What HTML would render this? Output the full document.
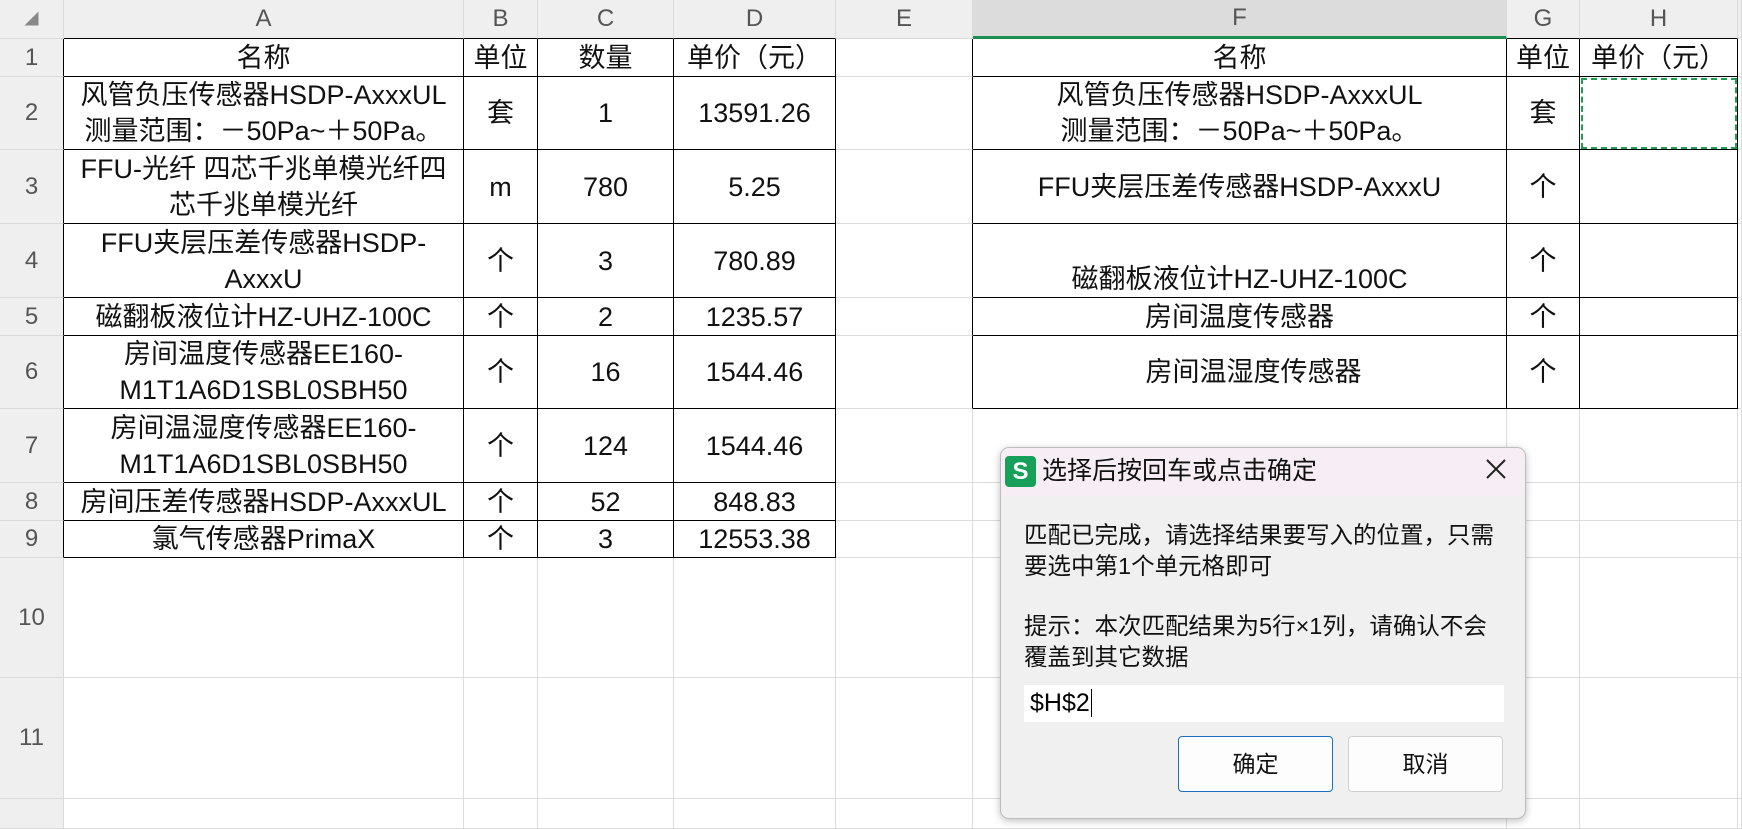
<!DOCTYPE html>
<html><head><meta charset="utf-8"><style>
body{margin:0;width:1742px;height:824px;overflow:hidden;background:#fff;font-family:"Liberation Sans","Noto Sans CJK SC",sans-serif;position:relative}
table{border-collapse:separate;border-spacing:0;table-layout:fixed;position:absolute;left:0;top:0}
td{border-right:1px solid #dcdcdc;border-bottom:1px solid #dcdcdc;padding:0;text-align:center;font-size:27px;line-height:36px;color:#111;overflow:hidden;white-space:nowrap}
td.h{background:#efefef;color:#555;font-size:24px;border-color:#dadada}
td.sel{background:#dcdcdc;border-bottom:3px solid #1e8e4e}
td.r{background:#efefef;color:#555;font-size:24px;border-color:#dadada}
.b{border-right-color:#000!important;border-bottom-color:#000!important}
.br{border-right-color:#000!important}
.bb{border-bottom-color:#000!important}
.dlg{position:absolute;left:1000px;top:447px;width:524px;height:370px;background:#f0f0f0;border:1px solid #bdbdbd;border-radius:9px;box-shadow:0 2px 8px rgba(0,0,0,.25);overflow:hidden}
.tb{height:48px;background:#f7eef5;position:relative}
.logo{position:absolute;left:4px;top:8px;width:31px;height:31px;background:#16a05a;border-radius:4px;color:#fff;font-size:24px;font-weight:bold;text-align:center;line-height:31px}
.tt{position:absolute;left:41px;top:8px;font-size:25px;color:#111;line-height:31px}
.x{position:absolute;right:18px;top:10px}
.tx{position:absolute;left:23px;font-size:23.5px;color:#111;line-height:31px;white-space:nowrap}
.inp{position:absolute;left:23px;top:237px;width:480px;height:37px;background:#fff;font-size:25px;line-height:37px;padding-left:6px;box-sizing:border-box}
.btn{position:absolute;top:288px;height:56px;width:155px;background:#fdfdfd;border:1px solid #d0d0d0;border-radius:4px;box-sizing:border-box;text-align:center;line-height:54px;font-size:23px;color:#111}
</style></head><body>
<table>
<colgroup><col style="width:64px"><col style="width:400px"><col style="width:74px"><col style="width:136px"><col style="width:162px"><col style="width:137px"><col style="width:534px"><col style="width:73px"><col style="width:158px"><col style="width:4px"></colgroup>
<tr style="height:38px"><td class="h" style="font-size:14px;color:#888">◢</td><td class="h bb">A</td><td class="h bb">B</td><td class="h bb">C</td><td class="h bb">D</td><td class="h">E</td><td class="h sel">F</td><td class="h bb">G</td><td class="h bb">H</td><td class="h"></td></tr>
<tr style="height:38px"><td class="r br">1</td><td class="b">名称</td><td class="b">单位</td><td class="b">数量</td><td class="b">单价（元）</td><td class="br"></td><td class="b">名称</td><td class="b">单位</td><td class="b">单价（元）</td><td></td></tr>
<tr style="height:73px"><td class="r br">2</td><td class="b">风管负压传感器HSDP-AxxxUL<br>测量范围：－50Pa~＋50Pa。</td><td class="b">套</td><td class="b">1</td><td class="b">13591.26</td><td class="br"></td><td class="b">风管负压传感器HSDP-AxxxUL<br>测量范围：－50Pa~＋50Pa。</td><td class="b">套</td><td class="b" style="outline:2px dashed #1e9e50;outline-offset:-3px"></td><td></td></tr>
<tr style="height:74px"><td class="r br">3</td><td class="b">FFU-光纤 四芯千兆单模光纤四<br>芯千兆单模光纤</td><td class="b">m</td><td class="b">780</td><td class="b">5.25</td><td class="br"></td><td class="b">FFU夹层压差传感器HSDP-AxxxU</td><td class="b">个</td><td class="b"></td><td></td></tr>
<tr style="height:74px"><td class="r br">4</td><td class="b">FFU夹层压差传感器HSDP-<br>AxxxU</td><td class="b">个</td><td class="b">3</td><td class="b">780.89</td><td class="br"></td><td class="b" style="vertical-align:bottom">磁翻板液位计HZ-UHZ-100C</td><td class="b">个</td><td class="b"></td><td></td></tr>
<tr style="height:38px"><td class="r br">5</td><td class="b">磁翻板液位计HZ-UHZ-100C</td><td class="b">个</td><td class="b">2</td><td class="b">1235.57</td><td class="br"></td><td class="b">房间温度传感器</td><td class="b">个</td><td class="b"></td><td></td></tr>
<tr style="height:73px"><td class="r br">6</td><td class="b">房间温度传感器EE160-<br>M1T1A6D1SBL0SBH50</td><td class="b">个</td><td class="b">16</td><td class="b">1544.46</td><td class="br"></td><td class="b" style="padding-left:28px">房间温湿度传感器</td><td class="b">个</td><td class="b"></td><td></td></tr>
<tr style="height:74px"><td class="r br">7</td><td class="b">房间温湿度传感器EE160-<br>M1T1A6D1SBL0SBH50</td><td class="b">个</td><td class="b">124</td><td class="b">1544.46</td><td></td><td></td><td></td><td></td><td></td></tr>
<tr style="height:38px"><td class="r br">8</td><td class="b">房间压差传感器HSDP-AxxxUL</td><td class="b">个</td><td class="b">52</td><td class="b">848.83</td><td></td><td></td><td></td><td></td><td></td></tr>
<tr style="height:36px"><td class="r br">9</td><td class="b">氯气传感器PrimaX</td><td class="b">个</td><td class="b">3</td><td class="b">12553.38</td><td></td><td></td><td></td><td></td><td></td></tr>
<tr style="height:120px"><td class="r">10</td><td></td><td></td><td></td><td></td><td></td><td></td><td></td><td></td><td></td></tr>
<tr style="height:121px"><td class="r">11</td><td></td><td></td><td></td><td></td><td></td><td></td><td></td><td></td><td></td></tr>
<tr style="height:30px"><td class="r"></td><td></td><td></td><td></td><td></td><td></td><td></td><td></td><td></td><td></td></tr>
</table>
<div class="dlg">
<div class="tb"><div class="logo">S</div><div class="tt">选择后按回车或点击确定</div>
<svg class="x" width="22" height="22" viewBox="0 0 22 22"><path d="M2 2L20 20M20 2L2 20" stroke="#222" stroke-width="2"/></svg></div>
<div class="tx" style="top:72px">匹配已完成，请选择结果要写入的位置，只需</div>
<div class="tx" style="top:103px">要选中第1个单元格即可</div>
<div class="tx" style="top:163px">提示：本次匹配结果为5行×1列，请确认不会</div>
<div class="tx" style="top:194px">覆盖到其它数据</div>
<div class="inp">$H$2<span style="border-left:1px solid #000;margin-left:1px"></span></div>
<div class="btn" style="left:177px;border-color:#1a6fc0">确定</div>
<div class="btn" style="left:347px">取消</div>
</div>
</body></html>
